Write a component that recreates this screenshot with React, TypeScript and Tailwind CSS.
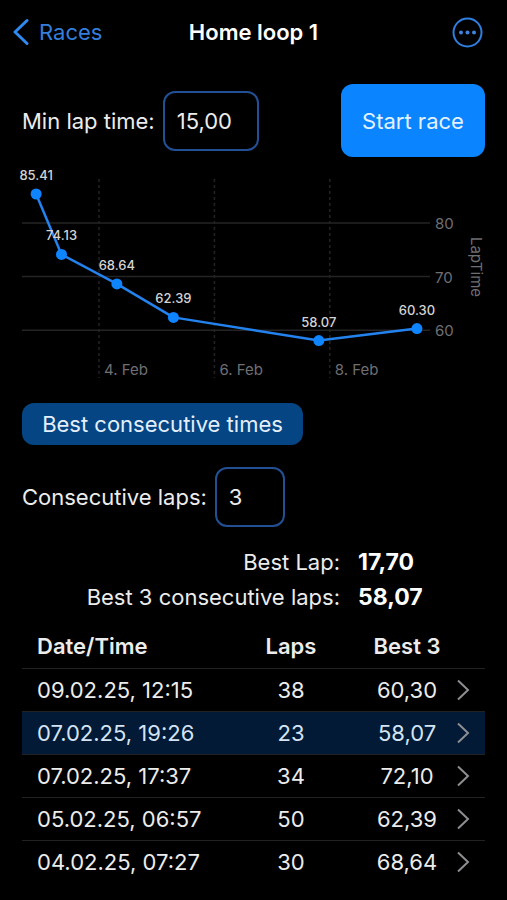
import { useState } from "react";

type Race = {
  date: string;
  laps: number;
  best: string;
};

type Point = {
  day: number;
  value: number;
};

const races: Race[] = [
  { date: "09.02.25, 12:15", laps: 38, best: "60,30" },
  { date: "07.02.25, 19:26", laps: 23, best: "58,07" },
  { date: "07.02.25, 17:37", laps: 34, best: "72,10" },
  { date: "05.02.25, 06:57", laps: 50, best: "62,39" },
  { date: "04.02.25, 07:27", laps: 30, best: "68,64" },
];

// day of February (with the time as a fraction) and best consecutive time
const points: Point[] = [
  { day: 2.91, value: 85.41 },
  { day: 3.35, value: 74.13 },
  { day: 4.31, value: 68.64 },
  { day: 5.29, value: 62.39 },
  { day: 7.81, value: 58.07 },
  { day: 9.51, value: 60.3 },
];

const x = (day: number) => 77 + (day - 4) * 57.7;
const y = (value: number) => 58 + (80 - value) * 5.36;

function LapChart() {
  return (
    <svg
      viewBox="0 0 463 220"
      className="mt-2 block w-full overflow-visible"
      role="img"
      aria-label="Best lap times by date"
    >
      {[80, 70, 60].map((v) => (
        <g key={v}>
          <line x1="0" x2="408" y1={y(v)} y2={y(v)} stroke="#242426" strokeWidth="1.5" />
          <text x="413" y={y(v) + 6} fontSize="15" fill="#6f6f73">
            {v}
          </text>
        </g>
      ))}
      {[4, 6, 8].map((d) => (
        <g key={d}>
          <line
            x1={x(d)}
            x2={x(d)}
            y1="14"
            y2="213"
            stroke="#232325"
            strokeWidth="1.5"
            strokeDasharray="3 3"
          />
          <text x={x(d) + 5} y="210" fontSize="15" fill="#6f6f73">
            {d}. Feb
          </text>
        </g>
      ))}
      <polyline
        points={points.map((p) => `${x(p.day)},${y(p.value)}`).join(" ")}
        fill="none"
        stroke="#2382ee"
        strokeWidth="2.5"
        strokeLinejoin="round"
      />
      {points.map((p) => (
        <g key={p.day}>
          <circle cx={x(p.day)} cy={y(p.value)} r="5.5" fill="#0f84ff" />
          <text
            x={x(p.day)}
            y={y(p.value) - 14}
            fontSize="13"
            fontWeight="500"
            fill="#d4d4d4"
            textAnchor="middle"
          >
            {p.value.toFixed(2)}
          </text>
        </g>
      ))}
      <text
        transform="translate(449 102) rotate(90)"
        fontSize="15"
        fill="#6f6f73"
        textAnchor="middle"
      >
        LapTime
      </text>
    </svg>
  );
}

export default function App() {
  const [minLap, setMinLap] = useState("15,00");
  const [laps, setLaps] = useState("3");

  return (
    <div className="min-h-screen bg-black pb-4 font-['Inter','Liberation_Sans',sans-serif] text-[22px] leading-7 text-[#ececec]">
      <header className="grid h-16 grid-cols-[1fr_auto_1fr] items-center px-3">
        <a href="#races" className="flex items-center gap-[10px] text-[#347fdc]">
          <svg width="17" height="28" viewBox="0 0 17 28" fill="none" aria-hidden="true">
            <path
              d="M15 2.5 3 14l12 11.5"
              stroke="#2f8af0"
              strokeWidth="3"
              strokeLinecap="round"
              strokeLinejoin="round"
            />
          </svg>
          Races
        </a>
        <h1 className="font-semibold text-white">Home loop 1</h1>
        <button type="button" aria-label="More" className="mr-3 justify-self-end">
          <svg width="31" height="31" viewBox="0 0 31 31" fill="none">
            <circle cx="15.5" cy="15.5" r="14" stroke="#2f7fe0" strokeWidth="2" />
            <circle cx="9" cy="15.5" r="2" fill="#3f84dc" />
            <circle cx="15.5" cy="15.5" r="2" fill="#3f84dc" />
            <circle cx="22" cy="15.5" r="2" fill="#3f84dc" />
          </svg>
        </button>
      </header>

      <main className="px-[22px] pt-5">
        <div className="flex items-center">
          <label htmlFor="min-lap">Min lap time:</label>
          <input
            id="min-lap"
            value={minLap}
            onChange={(e) => setMinLap(e.target.value)}
            className="ml-2 h-[60px] w-24 rounded-xl border-2 border-[#234f94] bg-black px-3"
          />
          <button
            type="button"
            className="ml-auto h-[73px] w-36 rounded-xl bg-[#0a84ff] text-[#e4f2ff]"
          >
            Start race
          </button>
        </div>

        <LapChart />

        <button
          type="button"
          className="mt-[18px] block h-[42px] w-[281px] rounded-xl bg-[#054584] text-[#e4effa]"
        >
          Best consecutive times
        </button>

        <div className="mt-[22px] flex items-center">
          <label htmlFor="laps">Consecutive laps:</label>
          <input
            id="laps"
            value={laps}
            onChange={(e) => setLaps(e.target.value)}
            className="ml-2 h-[60px] w-[70px] rounded-xl border-2 border-[#234f94] bg-black px-3"
          />
        </div>

        <dl className="mt-[18px] grid grid-cols-[318px_1fr] gap-x-[18px] leading-[35px]">
          <dt className="text-right">Best Lap:</dt>
          <dd className="text-[23px] font-bold text-white">17,70</dd>
          <dt className="text-right">Best {laps} consecutive laps:</dt>
          <dd className="text-[23px] font-bold text-white">58,07</dd>
        </dl>

        <table className="mt-[10px] w-full border-collapse">
          <thead>
            <tr className="h-[43px]">
              <th className="pl-[15px] text-left font-semibold">Date/Time</th>
              <th className="w-[150px] font-semibold">Laps</th>
              <th className="w-[82px] font-semibold whitespace-nowrap">Best {laps}</th>
              <th className="w-[37px]" aria-label="Open" />
            </tr>
          </thead>
          <tbody>
            {races.map((race) => (
              <tr
                key={race.date}
                className={`h-[43px] border-t border-[#222224] ${
                  race.best === "58,07" ? "bg-[#021a36] text-[#d5e4f5]" : ""
                }`}
              >
                <td className="pl-[15px] whitespace-nowrap">{race.date}</td>
                <td className="text-center">{race.laps}</td>
                <td className="text-center">{race.best}</td>
                <td className="pl-2">
                  <svg width="14" height="22" viewBox="0 0 14 22" fill="none" aria-hidden="true">
                    <path d="M2 1.5 12 11 2 20.5" stroke="#8e8e93" strokeWidth="2" />
                  </svg>
                </td>
              </tr>
            ))}
          </tbody>
        </table>
      </main>
    </div>
  );
}
